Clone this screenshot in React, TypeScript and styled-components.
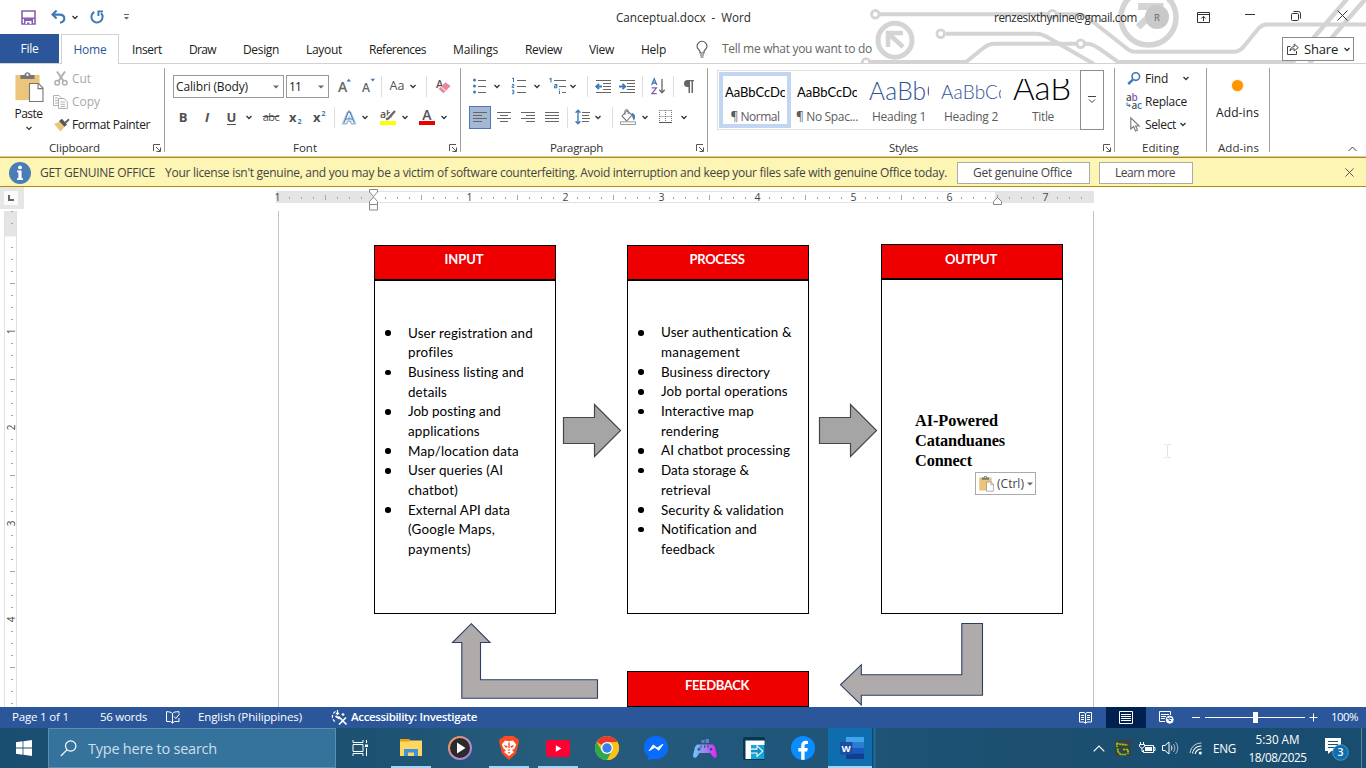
import React, { useLayoutEffect, useRef } from "react";
import styled, { createGlobalStyle, css } from "styled-components";

const UI = `"Open Sans", "Noto Sans", sans-serif`;
const DOC = `Lato, "Open Sans", sans-serif`;
const BLUE = "#2b579a";

const GlobalStyle = createGlobalStyle`
  * { box-sizing: border-box; }
  html, body { margin: 0; padding: 0; overflow: hidden; background: #fff; }
  body { font-family: ${UI}; font-size: 12px; color: #202020; }
  svg { display: block; flex: none; overflow: visible; }
`;

/* Tracks a label so that it takes exactly the width it is given. */
type FitProps = { w: number; children: string; className?: string };
function FitBase({ w, children, className }: FitProps) {
  const ref = useRef<HTMLSpanElement>(null);
  useLayoutEffect(() => {
    const el = ref.current;
    if (!el) return;
    el.style.letterSpacing = "0px";
    const natural = el.getBoundingClientRect().width;
    el.style.letterSpacing = `${(w - natural) / children.length}px`;
  }, [w, children]);
  return (
    <span ref={ref} className={className}>
      {children}
    </span>
  );
}
const Fit = styled(FitBase)`
  display: inline-block;
  flex: none;
  white-space: pre;
  line-height: 16px;
`;

/* ---------- frame ---------- */
const Window = styled.div`
  width: 1366px;
  height: 768px;
  display: flex;
  flex-direction: column;
  background: #fff;
  overflow: hidden;
`;
const Header = styled.header`
  position: relative;
  height: 64px;
  flex: none;
  border-bottom: 1px solid #d2d2d2;
`;
const Circuit = styled.svg`
  position: absolute;
  right: 0;
  top: 0;
  clip-path: inset(0);
`;
const TitleBar = styled.div`
  position: relative;
  height: 34px;
  display: flex;
  align-items: center;
`;
const Slot = styled.div<{ $w?: number; $l?: number }>`
  flex: none;
  display: flex;
  align-items: center;
  justify-content: center;
  width: ${(p) => (p.$w ? `${p.$w}px` : "auto")};
  margin-left: ${(p) => p.$l ?? 0}px;
`;
const TitleText = styled(Fit)`
  font-size: 11.7px;
  color: #2b2b2b;
`;
const Avatar = styled.div`
  width: 24px;
  height: 24px;
  margin-left: 8px;
  border-radius: 50%;
  background: #c9c9c9;
  color: #666;
  font-size: 9.5px;
  display: flex;
  align-items: center;
  justify-content: center;
`;
const TabBar = styled.nav`
  position: relative;
  height: 30px;
  display: flex;
  align-items: center;
`;
const FileTab = styled.div`
  width: 59px;
  height: 29px;
  align-self: flex-start;
  display: flex;
  align-items: center;
  justify-content: center;
  background: ${BLUE};
  color: #fff;
`;
const HomeTab = styled.div`
  width: 58px;
  height: 30px;
  margin-left: 2px;
  padding-top: 1px;
  border: 1px solid #d2d2d2;
  border-bottom: 0;
  background: #fff;
  color: ${BLUE};
  display: flex;
  align-items: center;
  justify-content: center;
`;
const TabLabel = styled(Fit)`
  font-size: 12px;
`;
const TabList = styled.div`
  display: flex;
  gap: 27px;
  margin-left: 13px;
  padding-top: 2px;
`;
const TellMe = styled(Fit)`
  font-size: 12px;
  color: #666;
  margin-left: 14px;
`;
const ShareButton = styled.div`
  width: 72px;
  height: 24px;
  margin-left: auto;
  margin-right: 12px;
  border: 1px solid #8a8a8a;
  background: #fff;
  display: flex;
  align-items: center;
  padding-left: 4px;
  gap: 5px;
`;
const ShareLabel = styled(Fit)`
  font-size: 13px;
`;

/* ---------- ribbon ---------- */
const Ribbon = styled.div`
  height: 92px;
  flex: none;
  display: flex;
`;
const GroupBox = styled.section<{ $w: number }>`
  width: ${(p) => p.$w}px;
  height: 92px;
  flex: none;
  display: flex;
  flex-direction: column;
  background: linear-gradient(#a0a0a0, #a0a0a0) right 4px / 1px 84px no-repeat;
`;
const GroupBody = styled.div`
  height: 75px;
  padding-top: 10px;
`;
const GroupFooter = styled.div`
  height: 17px;
  display: flex;
  align-items: center;
`;
const GroupName = styled(Fit)<{ $l: number }>`
  font-size: 11.5px;
  color: #333;
  margin-left: ${(p) => p.$l}px;
`;
const Launcher = styled.div`
  margin-left: auto;
  margin-right: 4px;
`;
const ToolRow = styled.div`
  display: flex;
  align-items: center;
  height: 24px;
  margin-bottom: 7px;
`;
const Rule = styled.i<{ $l: number }>`
  width: 1px;
  height: 21px;
  flex: none;
  background: #dedede;
  margin-left: ${(p) => p.$l}px;
`;
const Combo = styled.div<{ $w: number; $l: number }>`
  width: ${(p) => p.$w}px;
  height: 23px;
  margin-left: ${(p) => p.$l}px;
  flex: none;
  border: 1px solid #999;
  display: flex;
  align-items: center;
  justify-content: space-between;
  padding: 1px 4px 0 2px;
`;
const Command = styled(Fit)<{ $off?: boolean }>`
  font-size: 12px;
  color: ${(p) => (p.$off ? "#a8a8a8" : "#202020")};
`;
const Pressed = styled.div`
  width: 22px;
  height: 23px;
  margin-left: 8px;
  flex: none;
  border: 1px solid #4a7ab5;
  background: #a5b8d3;
  display: flex;
  align-items: center;
  justify-content: center;
`;
const CommandsBody = styled(GroupBody)`
  display: flex;
  padding-top: 3px;
`;
const PasteButton = styled.div`
  width: 52px;
  padding: 5px 0 0 7px;
  display: flex;
  flex-direction: column;
  align-items: center;
`;
const PasteCaption = styled.div`
  margin: 3px 0 0 -2px;
  height: 16px;
`;
const CommandColumn = styled.div`
  display: flex;
  flex-direction: column;
`;
const CommandRow = styled.div`
  height: 23px;
  display: flex;
  align-items: center;
`;
const Glyph = styled.span<{ $b?: boolean; $i?: boolean; $s?: number }>`
  font-size: ${(p) => p.$s ?? 13}px;
  font-weight: ${(p) => (p.$b ? 700 : 400)};
  font-style: ${(p) => (p.$i ? "italic" : "normal")};
  color: #505050;
  line-height: 18px;
`;
const Underlined = styled(Glyph)`
  border-bottom: 1px solid #505050;
  line-height: 14px;
`;
const Struck = styled(Glyph)`
  text-decoration: line-through;
  letter-spacing: -0.6px;
`;
const Gallery = styled.div`
  width: 387px;
  height: 60px;
  margin: -4px 0 0 9px;
  border: 1px solid #e1e1e1;
  display: flex;
`;
const StyleCard = styled.div<{ $on?: boolean }>`
  width: 72px;
  height: 56px;
  margin-top: 1px;
  flex: none;
  border: 4px solid ${(p) => (p.$on ? "#c2d5f2" : "transparent")};
  display: flex;
  flex-direction: column;
  align-items: center;
  &:first-child {
    margin-left: 1px;
  }
`;
const Sample = styled.div<{ $s: number; $light?: boolean; $c: string; $up?: number }>`
  width: 60px;
  height: 30px;
  margin-top: 3px;
  overflow: hidden;
  display: flex;
  align-items: flex-start;
  font-family: ${DOC};
  font-size: ${(p) => p.$s}px;
  font-weight: ${(p) => (p.$light ? 300 : 400)};
  color: ${(p) => p.$c};
  & span {
    line-height: 32px;
    margin-top: ${(p) => -3 - (p.$up ?? 0)}px;
  }
`;
const StyleName = styled(Fit)`
  font-size: 12px;
  line-height: 15px;
  color: #5c5c5c;
`;
const MoreStyles = styled.div`
  width: 24px;
  height: 60px;
  margin: -1px -1px 0 auto;
  border: 1px solid #8e8e8e;
  display: flex;
  align-items: center;
  justify-content: center;
`;
const AddIns = styled.div`
  display: flex;
  flex-direction: column;
  align-items: center;
  gap: 14px;
  padding: 6px 2px 0 0;
`;
const Dot = styled.div`
  width: 11px;
  height: 11px;
  border-radius: 50%;
  background: #ff9500;
  box-shadow: 0 0 2px #ffc680;
`;
const Collapse = styled.div`
  margin-left: 78px;
  align-self: flex-end;
  padding-bottom: 4px;
`;

/* ---------- licence bar ---------- */
const Notice = styled.div`
  height: 31px;
  flex: none;
  border-top: 1px solid #d2cdb5;
  background: #fcf5b4;
  box-shadow: inset 0 1px #b58c0a, inset 0 -1px #b58c0a;
  display: flex;
  align-items: center;
  padding: 1px 0 0 9px;
`;
const NoticeText = styled(Fit)`
  font-size: 12px;
  color: #444;
`;
const NoticeButton = styled.div<{ $w: number; $l: number }>`
  width: ${(p) => p.$w}px;
  height: 22px;
  margin-left: ${(p) => p.$l}px;
  padding-right: 2px;
  border: 1px solid #ababab;
  background: #fff;
  display: flex;
  align-items: center;
  justify-content: center;
`;

/* ---------- document area ---------- */
const RulerRow = styled.div`
  height: 24px;
  flex: none;
  display: flex;
`;
const TabStop = styled.div`
  width: 24px;
  height: 22px;
  background: #e6e6e6;
  padding: 4px 0 0 4px;
`;
const TabStopBox = styled.div`
  width: 14px;
  height: 14px;
  background: #fafafa;
  display: flex;
  align-items: center;
  justify-content: center;
`;
const HRuler = styled.div`
  width: 818px;
  height: 12px;
  margin: 4px 0 0 252px;
  background: #e4e4e4;
`;
const Desk = styled.div`
  height: 496px;
  flex: none;
  display: flex;
  position: relative;
  overflow: hidden;
`;
const VRuler = styled.div`
  width: 13px;
  height: 496px;
  margin-left: 4px;
  flex: none;
  background: #fff;
  border: solid #e1e1e1;
  border-width: 0 1px;
`;
const Page = styled.main`
  position: relative;
  width: 816px;
  margin-left: 261px;
  flex: none;
  border: solid #c3c3c3;
  border-width: 0 1px;
`;
const Shapes = styled.svg`
  position: absolute;
  left: 0;
  top: 0;
`;
const Node = styled.div<{ $x: number; $y: number; $h: number }>`
  position: absolute;
  left: ${(p) => p.$x}px;
  top: ${(p) => p.$y}px;
  width: 182px;
  height: ${(p) => p.$h}px;
  border: 1px solid #000;
  background: #fff;
`;
const NodeHead = styled.div<{ $divided?: boolean; $pad?: number }>`
  height: ${(p) => (p.$divided ? 35 : 34)}px;
  background: #ee0000;
  color: #fff;
  font-family: ${DOC};
  font-weight: 700;
  font-size: 13px;
  text-align: center;
  padding: ${(p) => p.$pad ?? 5}px 2px 0 0;
  ${(p) =>
    p.$divided &&
    css`
      border-bottom: 2px solid #000;
    `}
`;
const Lines = styled.div<{ $top: number }>`
  padding-top: ${(p) => p.$top}px;
`;
const Line = styled.div`
  height: 19.7px;
  display: flex;
  align-items: center;
  font-family: ${DOC};
  font-size: 13.4px;
  color: #000;
`;
const Bullet = styled.i<{ $on: boolean }>`
  width: 5.5px;
  height: 5.5px;
  margin: 1px 17.5px 0 10px;
  border-radius: 50%;
  background: ${(p) => (p.$on ? "#000" : "transparent")};
`;
const Result = styled.div`
  padding: 131px 0 0 33px;
  display: flex;
  flex-direction: column;
  align-items: flex-start;
`;
const ResultLine = styled(Fit)`
  font-family: "Liberation Serif", serif;
  font-weight: 700;
  font-size: 16.3px;
  line-height: 20px;
  color: #000;
`;
const PasteOptions = styled.div`
  position: absolute;
  left: 696px;
  top: 261px;
  width: 61px;
  height: 23px;
  border: 1px solid #ababab;
  background: #fff;
  display: flex;
  align-items: center;
  padding-left: 3px;
  gap: 3px;
`;
const PasteLabel = styled(Fit)`
  font-size: 12px;
  color: #444;
`;
const TextCursor = styled.svg`
  position: absolute;
  left: 1164px;
  top: 233px;
`;

/* ---------- status bar ---------- */
const Status = styled.footer`
  height: 21px;
  flex: none;
  background: ${BLUE};
  color: #fff;
  display: flex;
  align-items: center;
`;
const StatusText = styled(Fit)<{ $l: number; $b?: boolean }>`
  font-size: 11.5px;
  font-weight: ${(p) => (p.$b ? 600 : 400)};
  margin-left: ${(p) => p.$l}px;
  margin-top: -1px;
`;
const ViewOn = styled.div`
  width: 40px;
  height: 21px;
  margin-left: 14px;
  background: #002050;
  display: flex;
  align-items: center;
  justify-content: center;
`;

/* ---------- taskbar ---------- */
const Taskbar = styled.div`
  height: 40px;
  flex: none;
  display: flex;
  background: linear-gradient(90deg, #1a4e70 0%, #1d5273 28%, #275c7d 40%, #20567a 58%, #1c4f70 75%, #184d70 100%);
`;
const StartCell = styled.div`
  width: 48px;
  display: flex;
  align-items: center;
  justify-content: center;
`;
const SearchBox = styled.div`
  width: 288px;
  height: 40px;
  border: 1px solid #5b90b3;
  background: #35739d;
  display: flex;
  align-items: center;
  padding-left: 11px;
`;
const SearchLabel = styled(Fit)`
  font-size: 14.5px;
  line-height: 20px;
  color: #cfdfe9;
  margin: 1px 0 0 11px;
`;
const AppCell = styled.div<{ $run?: boolean; $active?: boolean }>`
  width: 49px;
  height: 40px;
  flex: none;
  display: flex;
  align-items: center;
  justify-content: center;
  ${(p) =>
    p.$run &&
    css`
      background: linear-gradient(#9fd5fb, #9fd5fb) center bottom / 40px 2px no-repeat;
    `}
  ${(p) =>
    p.$active &&
    css`
      width: 44px;
      margin: 0 4px 0 1px;
      padding-left: 4px;
      background: linear-gradient(#9fd5fb, #9fd5fb) left bottom / 44px 2px no-repeat, #0f6cad;
      box-shadow: 1px 0 #14435f, 4px 0 #1d6391;
    `}
`;
const Tray = styled.div`
  margin-left: auto;
  display: flex;
  align-items: center;
  color: #fff;
`;
const Clock = styled.div`
  width: 60px;
  margin-left: 12px;
  padding-right: 1px;
  display: flex;
  flex-direction: column;
  align-items: center;
`;
const TrayText = styled(Fit)`
  font-size: 11.7px;
  line-height: 18px;
`;
const ShowDesktop = styled.div`
  width: 5px;
  height: 40px;
  margin-left: 12px;
  border-left: 1px solid #5d8299;
`;

/* ---------- icons ---------- */
const Chevron = ({ c = "#333" }: { c?: string }) => (
  <svg width="8" height="5" viewBox="0 0 8 5">
    <path d="M1.5 1 L4 3.5 L6.5 1" fill="none" stroke={c} strokeWidth="1.3" />
  </svg>
);
const Drop = () => (
  <svg width="6" height="4" viewBox="0 0 6 4">
    <path d="M0 0.5H6L3 3.5Z" fill="#666" />
  </svg>
);
const LaunchIcon = () => (
  <svg width="8" height="8" viewBox="0 0 8 8" fill="none" stroke="#555">
    <path d="M.5 7V.5H7M3 3L7 7M7.5 3.5V7.5H3.5" />
  </svg>
);
const StrokeLines = ({ rows, w = 14 }: { rows: [number, number][]; w?: number }) => (
  <svg width={w} height="11" viewBox={`0 0 ${w} 11`} stroke="#666" strokeWidth="1">
    {rows.map(([a, b], i) => (
      <path key={i} d={`M${a} ${i * 3 + 0.5}H${b}`} />
    ))}
  </svg>
);
const SaveIcon = () => (
  <svg width="15" height="15" viewBox="0 0 15 15">
    <path d="M1 1H14V14H1Z" fill="#fff" stroke="#8a5cb0" strokeWidth="1.6" />
    <path d="M1 7.5H14V9H1Z M3 9H12V14H3Z" fill="#8a5cb0" />
    <path d="M4.5 11H10.5V14H8.5V12.5H6V14H4.5Z" fill="#fff" />
  </svg>
);
const UndoIcon = () => (
  <svg width="15" height="14" viewBox="0 0 15 14" fill="none" stroke="#3f79b7" strokeWidth="2.1">
    <path d="M1.5 4.6H8.5C11.5 4.6 13.3 6.3 13.3 8.6C13.3 10.8 11.6 12.4 9 12.8" />
    <path d="M5.6 .6L1.5 4.6L5.6 8.6" />
  </svg>
);
const RedoIcon = () => (
  <svg width="14" height="14" viewBox="0 0 14 14" fill="none" stroke="#3f79b7" strokeWidth="2">
    <path d="M4.3 2A5.6 5.6 0 1 0 11 3" />
    <path d="M13 1.4H8.4V6" strokeWidth="1.9" />
  </svg>
);
const PasteIcon = ({ s = 29 }: { s?: number }) => (
  <svg width={s} height={s * 1.04} viewBox="0 0 28 30">
    <path d="M0 3H24V28H0Z" fill="#ecc57c" />
    <path d="M5 3H9C9 -.7 15 -.7 15 3H19V7H5Z" fill="#777" />
    <circle cx="12" cy="2.8" r="1.2" fill="#fff" />
    <path d="M14 11.5H23L27.4 16V29.3H14Z" fill="#fff" stroke="#777" strokeWidth="1.1" />
    <path d="M22.5 11.5V16.5H27.4" fill="none" stroke="#777" strokeWidth="1.1" />
  </svg>
);
const CutIcon = () => (
  <svg width="14" height="15" viewBox="0 0 14 15" fill="none" stroke="#b0b0b0" strokeWidth="1.5">
    <path d="M3 .5L9.5 10M11 .5L4.5 10" strokeWidth="2" />
    <circle cx="3.2" cy="11.7" r="2.3" />
    <circle cx="10.8" cy="11.7" r="2.3" />
  </svg>
);
const CopyIcon = () => (
  <svg width="15" height="14" viewBox="0 0 15 14" fill="#fff" stroke="#b0b0b0">
    <path d="M.5 .5H6L8.5 3V10.5H.5Z M2 3H5M2 5.5H5M2 8H5" />
    <path d="M5.5 3.5H11L14.3 6.5V13.5H5.5Z M7.5 7H12M7.5 9.3H12M7.5 11.5H12" />
  </svg>
);
const BrushIcon = () => (
  <svg width="16" height="14" viewBox="0 0 16 14">
    <path d="M0 6L6 3.5L11 8.5L6.5 13.5Z" fill="#ecc57c" />
    <path d="M5 3L8 .8L13 6.5L10.5 8.8Z" fill="#555" />
    <path d="M10 4.5L14.5 .6L15.6 2L11.6 6Z" fill="#666" />
  </svg>
);
const SizeIcon = ({ up }: { up?: boolean }) => (
  <svg width="14" height="16" viewBox="0 0 14 16">
    <text x="0" y="14" fontFamily={UI} fontSize={up ? 14 : 12} fontWeight="600" fill="#666">A</text>
    <path d={up ? "M8.5 3.5L10.8 .8L13 3.5Z" : "M8.5 .8L10.8 3.5L13 .8Z"} fill="#3f79b7" />
  </svg>
);
const EraserIcon = () => (
  <svg width="16" height="16" viewBox="0 0 16 16">
    <text x="1" y="9.5" fontFamily={UI} fontSize="11" fontWeight="600" fill="#555">A</text>
    <path d="M3.5 11L10.5 4.3L15.6 8L8.5 15.2Z" fill="#e8889a" />
    <path d="M5.5 8.5L10.7 12.8" stroke="#fff" />
  </svg>
);
const SubSup = ({ up }: { up?: boolean }) => (
  <svg width="13" height="15" viewBox="0 0 13 15">
    <text x="0" y="11.5" fontFamily={UI} fontSize="13" fontWeight="700" fill="#505050">x</text>
    <text x="8.5" y={up ? 6 : 14} fontFamily={UI} fontSize="7" fontWeight="700" fill="#3f79b7">2</text>
  </svg>
);
const EffectIcon = () => (
  <svg width="14" height="15" viewBox="0 0 14 15">
    <text x="1" y="12.5" fontFamily={UI} fontSize="15" fontWeight="600" fill="#fff" stroke="#3f79b7" strokeWidth="3.2" strokeOpacity=".5" paintOrder="stroke">A</text>
    <path d="M1.2 12.5L5.4 1.8H6.8L11 12.5M3 9H9.2" fill="none" stroke="#3f79b7" strokeWidth="1" />
  </svg>
);
const HighlightIcon = () => (
  <svg width="16" height="16" viewBox="0 0 16 16">
    <text x="0" y="9" fontFamily={UI} fontSize="10.5" fontWeight="600" fill="#555">ab</text>
    <path d="M14.5 1.5L7 10" stroke="#fff" strokeWidth="4" />
    <path d="M15 2L8.5 9.3L6 10.5" stroke="#666" strokeWidth="2.2" fill="none" />
    <path d="M0 12H16V16H0Z" fill="#ffff00" />
  </svg>
);
const ColorIcon = () => (
  <svg width="16" height="16" viewBox="0 0 16 16">
    <text x="3.2" y="11" fontFamily={UI} fontSize="14" fontWeight="600" fill="#555">A</text>
    <path d="M0 12H16V16H0Z" fill="#ee0000" />
  </svg>
);
const BulletsIcon = () => (
  <svg width="14" height="16" viewBox="0 0 14 16">
    {[2, 8, 14].map((y) => (
      <g key={y}>
        <circle cx="1.5" cy={y} r="1.5" fill="#3f79b7" />
        <path d={`M5 ${y + 0.5}H13`} stroke="#666" />
      </g>
    ))}
  </svg>
);
const NumbersIcon = () => (
  <svg width="16" height="16" viewBox="0 0 16 16">
    <path d="M1 .5L2.5 0V4M1 6.5H2.8V8H1.2V9.5H3.2M1 12.3H2.8V15.7H1M1.4 14H2.8" fill="none" stroke="#3f79b7" />
    <path d="M6 2.5H15M6 8.5H15M6 14.5H15" stroke="#666" />
  </svg>
);
const MultiIcon = () => (
  <svg width="18" height="16" viewBox="0 0 18 16">
    <path d="M.5 1L2 .3V4.5M5.5 6.5H7.8V10M7.8 8H5.5V9.7H8M10.5 12.7V16M10.5 10.8V11.8" fill="none" stroke="#3f79b7" strokeWidth="1.1" />
    <path d="M5 2.5H17M10 8.5H17M13 14.5H17" stroke="#666" />
  </svg>
);
const IndentIcon = ({ out }: { out?: boolean }) => (
  <svg width="17" height="13" viewBox="0 0 17 13" fill="none">
    <path d="M1 .5H16M8 3.5H16M8 6.5H16M8 9.5H16M1 12.5H16" stroke="#666" />
    <path d={out ? "M7 6.5H1.5M4 3.8L1.2 6.5L4 9.2" : "M0 6.5H6M3.5 3.8L6.3 6.5L3.5 9.2"} stroke="#3f79b7" strokeWidth="1.8" />
  </svg>
);
const SortIcon = () => (
  <svg width="15" height="17" viewBox="0 0 15 17" fill="none">
    <path d="M.7 7L3.2 .8L5.8 7M1.6 5H4.9" stroke="#3f79b7" strokeWidth="1.3" />
    <path d="M.7 9.8H5.4L.9 15.7H5.8" stroke="#8a5cb0" strokeWidth="1.3" />
    <path d="M11 1V15M8.3 11.8L11 14.8L13.7 11.8" stroke="#666" strokeWidth="1.3" />
  </svg>
);
const PilcrowIcon = () => (
  <svg width="12" height="13" viewBox="0 0 12 13" fill="#666">
    <path d="M11 0H4.5A3.5 3.5 0 0 0 4.5 7H5.5V13H7V1.2H8.5V13H10V1.2H11Z" />
  </svg>
);
const SpacingIcon = () => (
  <svg width="15" height="16" viewBox="0 0 15 16" fill="none">
    <path d="M3 1.5V14.5M.6 3.8L3 1.3L5.4 3.8M.6 12.2L3 14.7L5.4 12.2" stroke="#3f79b7" strokeWidth="1.4" />
    <path d="M7 3.5H15M7 6.5H14M7 9.5H15M7 12.5H14" stroke="#666" />
  </svg>
);
const BucketIcon = () => (
  <svg width="18" height="16" viewBox="0 0 18 16" fill="none">
    <path d="M8 1.5L3 7.2L7.7 12L13 6Z" fill="#fff" stroke="#777" strokeWidth="1.1" />
    <path d="M6 6V1.6C6 .3 9.2 .3 9.2 1.6V5" stroke="#777" />
    <path d="M12.5 4C16.5 4.5 16.8 8 15 11.5C13.7 10 13.3 8 13 6Z" fill="#3f79b7" />
    <path d="M1.5 12.8H16.5V15.5H1.5Z" fill="#fff" stroke="#999" />
  </svg>
);
const BorderIcon = () => (
  <svg width="14" height="14" viewBox="0 0 14 14" fill="none" stroke="#777">
    <path d="M.5 .5H13M.5 6.5H13M.5 0V12M6.5 0V12M12.5 0V12" strokeDasharray="1 1" />
    <path d="M0 12.5H13" stroke="#555" />
  </svg>
);
const FindIcon = () => (
  <svg width="14" height="13" viewBox="0 0 14 13" fill="none" stroke="#3f79b7">
    <circle cx="8.8" cy="4.6" r="3.8" strokeWidth="1.6" />
    <path d="M6 7.6L1.2 12" strokeWidth="2.4" />
  </svg>
);
const ReplaceIcon = () => (
  <svg width="17" height="17" viewBox="0 0 17 17" fontFamily={UI} fontSize="10" fontWeight="600">
    <text x="0" y="8" fill="#555">a</text>
    <text x="5.5" y="8" fill="#8a5cb0">b</text>
    <text x="5.5" y="15.5" fill="#555">a</text>
    <text x="11" y="15.5" fill="#3f79b7">c</text>
    <path d="M1 9.5V12.5H4M2.6 10.8L4.2 12.5L2.6 14.2" fill="none" stroke="#3f79b7" />
  </svg>
);
const PointerIcon = () => (
  <svg width="10" height="15" viewBox="0 0 10 15">
    <path d="M.8 .8V12L3.6 9.5L5.5 14L7.5 13L5.6 9H9.2Z" fill="#fff" stroke="#777" strokeWidth="1.1" />
  </svg>
);
const BulbIcon = () => (
  <svg width="12" height="17" viewBox="0 0 12 17" fill="none" stroke="#555" strokeWidth="1.1">
    <path d="M4 12V10.5C3.5 8.8 1 8 1 5.3A4.8 4.8 0 0 1 11 5.3C11 8 8.5 8.8 8 10.5V12ZM4 14H8M4.5 16H7.5" />
  </svg>
);
const ShareIcon = () => (
  <svg width="12" height="12" viewBox="0 0 12 12" fill="none" stroke="#444">
    <path d="M3.5 3.5H.5V11.5H9.5V8" />
    <path d="M3 8C3.3 5 5 3.7 7.2 3.7V1L11.3 4.6L7.2 8V5.8C5.3 5.7 4 6.5 3 8Z" />
  </svg>
);
const InfoIcon = () => (
  <svg width="22" height="22" viewBox="0 0 22 22">
    <circle cx="11" cy="11" r="11" fill="#4a7db5" />
    <circle cx="11" cy="5.4" r="1.9" fill="#fff" />
    <path d="M8 8.5H12.6V16.3H14V18H8V16.3H9.4V10.2H8Z" fill="#fff" />
  </svg>
);
const Cross = ({ s = 9, c = "#555" }: { s?: number; c?: string }) => (
  <svg width={s} height={s} viewBox="0 0 10 10">
    <path d="M.5 .5L9.5 9.5M9.5 .5L.5 9.5" stroke={c} strokeWidth="1.1" />
  </svg>
);

const CircuitArt = () => (
  <Circuit width="506" height="63" viewBox="860 0 506 63" fill="none" stroke="#d4d4d4" strokeWidth="4">
    <path d="M880 14.3H1075C1082 14.3 1086 16 1090 19.5L1125 47C1129 50.5 1131 51.7 1136 51.7H1234C1238 51.7 1240 50.5 1243 47.5L1258 29C1261 25.5 1263 24.5 1267 24.5H1366" />
    <path d="M946 33.7H1036C1041 33.7 1044 35 1048 37.5L1094 64" />
    <path d="M871 62H966L984 47.5C988 44.5 991 43.7 995 43.7H1086C1092 43.7 1095 45.5 1099 48.5L1118 62H1292" />
    <path d="M1347 -1L1291 64M1368 -4L1309 64" strokeWidth="4.5" />
    <circle cx="1148.5" cy="17.5" r="27.5" fill="#fff" strokeWidth="5.5" />
    <path d="M1138 6.5H1160V26M1159 8L1138 27" strokeWidth="7" />
    <circle cx="895" cy="40.2" r="17" fill="#fff" strokeWidth="5" />
    <path d="M888 47V33H903M889 34L903 47" strokeWidth="4.5" />
    <g fill="#fff" strokeWidth="2.8">
      <circle cx="875.3" cy="14.3" r="3.8" />
      <circle cx="1052.3" cy="14.3" r="3.8" />
      <circle cx="940.7" cy="33.7" r="3.8" />
      <circle cx="1080.7" cy="43.7" r="3.8" />
      <circle cx="866" cy="62.5" r="3.8" />
    </g>
  </Circuit>
);

/* ---------- rulers ---------- */
const range = (a: number, b: number) => Array.from({ length: b - a + 1 }, (_, i) => a + i);

const HorizontalRuler = () => (
  <HRuler>
    <svg width="818" height="12" viewBox="276 191 818 12">
      <path d="M373 191H995V203H373Z" fill="#e1e1e1" />
      <path d="M373 192H995V202H373Z" fill="#fff" />
      {range(-7, 59).map((i) => {
        if (i % 8 === 0) return null;
        const x = 373.5 + i * 12;
        return <path key={i} d={i % 4 === 0 ? `M${x} 195V200` : `M${x} 197V199`} stroke="#a6a6a6" />;
      })}
      {[-1, 1, 2, 3, 4, 5, 6, 7].map((n) => (
        <text key={n} x={373.5 + n * 96} y="201" fontSize="10.5" fontFamily={UI} fill="#444" textAnchor="middle">
          {Math.abs(n)}
        </text>
      ))}
      <g fill="#fff" stroke="#888">
        <path d="M369.5 189.5H377.5V192L373.5 196.5L369.5 192Z" />
        <path d="M373.5 197L377.5 201.5V204.5H369.5V201.5Z M369.5 204.5H377.5V210H369.5Z" />
        <path d="M997.5 197.5L1001.5 201.5V204.5H993.5V201.5Z" />
      </g>
    </svg>
  </HRuler>
);

const VerticalRuler = () => (
  <VRuler>
    <svg width="11" height="496" viewBox="5 211 11 496">
      <path d="M5 211H16V236.5H5Z" fill="#e4e4e4" />
      {range(-2, 39).map((i) => {
        if (i % 8 === 0) return null;
        const y = 235.5 + i * 12;
        return <path key={i} d={i % 4 === 0 && i > 0 ? `M10 ${y}H15` : `M11 ${y}H13`} stroke="#a6a6a6" />;
      })}
      {[1, 2, 3, 4].map((n) => (
        <text key={n} transform={`translate(14.5 ${235.5 + n * 96}) rotate(-90)`} fontSize="10" fontFamily={UI} fill="#444" textAnchor="middle">
          {n}
        </text>
      ))}
    </svg>
  </VRuler>
);

/* ---------- ribbon groups ---------- */
function Group(props: { w: number; name: string; nameX: number; nameW: number; launch?: boolean; children: React.ReactNode }) {
  return (
    <GroupBox $w={props.w}>
      {props.children}
      <GroupFooter>
        <GroupName w={props.nameW} $l={props.nameX}>{props.name}</GroupName>
        {props.launch && <Launcher><LaunchIcon /></Launcher>}
      </GroupFooter>
    </GroupBox>
  );
}

const ClipboardGroup = () => (
  <Group w={165} name="Clipboard" nameX={49} nameW={51} launch>
    <CommandsBody>
      <PasteButton>
        <PasteIcon />
        <PasteCaption><Command w={28}>Paste</Command></PasteCaption>
        <svg width="9" height="11" viewBox="0 0 9 11"><path d="M1.5 6L4 8.5L6.5 6" fill="none" stroke="#333" strokeWidth="1.2" /></svg>
      </PasteButton>
      <CommandColumn>
        <CommandRow><Slot $l={2} $w={14}><CutIcon /></Slot><Slot $l={4}><Command w={19} $off>Cut</Command></Slot></CommandRow>
        <CommandRow><Slot $l={1} $w={15}><CopyIcon /></Slot><Slot $l={4}><Command w={28} $off>Copy</Command></Slot></CommandRow>
        <CommandRow><Slot $l={2} $w={16}><BrushIcon /></Slot><Slot $l={2}><Command w={78}>Format Painter</Command></Slot></CommandRow>
      </CommandColumn>
    </CommandsBody>
  </Group>
);

const FontGroup = () => (
  <Group w={296} name="Font" nameX={128} nameW={24} launch>
    <GroupBody>
      <ToolRow>
        <Combo $w={111} $l={8}><Command w={72}>Calibri (Body)</Command><Drop /></Combo>
        <Combo $w={43} $l={2}><Command w={12}>11</Command><Drop /></Combo>
        <Slot $l={9} $w={14}><SizeIcon up /></Slot>
        <Slot $l={10} $w={14}><SizeIcon /></Slot>
        <Rule $l={5} />
        <Slot $l={7} $w={16}><Glyph $s={12.5}>Aa</Glyph></Slot>
        <Slot $l={4}><Chevron /></Slot>
        <Rule $l={9} />
        <Slot $l={8} $w={16}><EraserIcon /></Slot>
      </ToolRow>
      <ToolRow>
        <Slot $l={13} $w={10}><Glyph $b>B</Glyph></Slot>
        <Slot $l={14} $w={10}><Glyph $b $i>I</Glyph></Slot>
        <Slot $l={14} $w={11}><Underlined $b>U</Underlined></Slot>
        <Slot $l={8}><Chevron /></Slot>
        <Slot $l={10} $w={16}><Struck $s={11}>abc</Struck></Slot>
        <Slot $l={10} $w={12}><SubSup /></Slot>
        <Slot $l={12} $w={12}><SubSup up /></Slot>
        <Rule $l={9} />
        <Slot $l={8} $w={14}><EffectIcon /></Slot>
        <Slot $l={4}><Chevron /></Slot>
        <Slot $l={11} $w={16}><HighlightIcon /></Slot>
        <Slot $l={5}><Chevron /></Slot>
        <Slot $l={10} $w={16}><ColorIcon /></Slot>
        <Slot $l={5}><Chevron /></Slot>
      </ToolRow>
    </GroupBody>
  </Group>
);

const ParagraphGroup = () => (
  <Group w={247} name="Paragraph" nameX={89} nameW={53} launch>
    <GroupBody>
      <ToolRow>
        <Slot $l={12}><BulletsIcon /></Slot>
        <Slot $l={6}><Chevron /></Slot>
        <Slot $l={10}><NumbersIcon /></Slot>
        <Slot $l={6}><Chevron /></Slot>
        <Slot $l={8}><MultiIcon /></Slot>
        <Slot $l={2}><Chevron /></Slot>
        <Rule $l={10} />
        <Slot $l={7}><IndentIcon out /></Slot>
        <Slot $l={7}><IndentIcon /></Slot>
        <Rule $l={6} />
        <Slot $l={8}><SortIcon /></Slot>
        <Rule $l={7} />
        <Slot $l={9}><PilcrowIcon /></Slot>
      </ToolRow>
      <ToolRow>
        <Pressed><StrokeLines rows={[[0, 14], [0, 9], [0, 14], [0, 9]]} /></Pressed>
        <Slot $l={6}><StrokeLines rows={[[0, 14], [3, 11], [0, 14], [3, 11]]} /></Slot>
        <Slot $l={10}><StrokeLines rows={[[0, 14], [5, 14], [0, 14], [5, 14]]} /></Slot>
        <Slot $l={10}><StrokeLines rows={[[0, 14], [0, 14], [0, 14], [0, 14]]} /></Slot>
        <Rule $l={8} />
        <Slot $l={7}><SpacingIcon /></Slot>
        <Slot $l={4}><Chevron /></Slot>
        <Rule $l={10} />
        <Slot $l={6}><BucketIcon /></Slot>
        <Slot $l={4}><Chevron /></Slot>
        <Slot $l={10}><BorderIcon /></Slot>
        <Slot $l={7}><Chevron /></Slot>
      </ToolRow>
    </GroupBody>
  </Group>
);

const STYLES = [
  { name: "¶ Normal", w: 49, text: "AaBbCcDc", tw: 61, s: 13, c: "#000", light: false, up: 0 },
  { name: "¶ No Spac...", w: 62, text: "AaBbCcDc", tw: 61, s: 13, c: "#000", light: false, up: 0 },
  { name: "Heading 1", w: 54, text: "AaBbC", tw: 74, s: 24.5, c: "#2f5496", light: true, up: 1.5 },
  { name: "Heading 2", w: 54, text: "AaBbCc", tw: 66, s: 19, c: "#2f5496", light: true, up: 0 },
  { name: "Title", w: 22, text: "AaB", tw: 58, s: 33, c: "#000", light: true, up: 5 },
];

const StylesGroup = () => (
  <Group w={407} name="Styles" nameX={181} nameW={29} launch>
    <GroupBody>
      <Gallery>
        {STYLES.map((s, i) => (
          <StyleCard key={s.name} $on={i === 0}>
            <Sample $s={s.s} $light={s.light} $c={s.c} $up={s.up}><Fit w={s.tw}>{s.text}</Fit></Sample>
            <StyleName w={s.w}>{s.name}</StyleName>
          </StyleCard>
        ))}
        <MoreStyles>
          <svg width="8" height="8" viewBox="0 0 8 8" fill="none" stroke="#444"><path d="M0 .5H8M1 3.5L4 6.5L7 3.5" /></svg>
        </MoreStyles>
      </Gallery>
    </GroupBody>
  </Group>
);

const EditingGroup = () => (
  <Group w={92} name="Editing" nameX={27} nameW={37}>
    <CommandsBody>
      <CommandColumn>
        <CommandRow><Slot $l={12} $w={14}><FindIcon /></Slot><Slot $l={4}><Command w={23}>Find</Command></Slot><Slot $l={14}><Chevron /></Slot></CommandRow>
        <CommandRow><Slot $l={11} $w={17}><ReplaceIcon /></Slot><Slot $l={2}><Command w={42}>Replace</Command></Slot></CommandRow>
        <CommandRow><Slot $l={15} $w={10}><PointerIcon /></Slot><Slot $l={5}><Command w={31}>Select</Command></Slot><Slot $l={3}><Chevron /></Slot></CommandRow>
      </CommandColumn>
    </CommandsBody>
  </Group>
);

const AddInsGroup = () => (
  <Group w={63} name="Add-ins" nameX={11} nameW={41}>
    <GroupBody><AddIns><Dot /><Command w={43}>Add-ins</Command></AddIns></GroupBody>
  </Group>
);

/* ---------- diagram ---------- */
type Entry = [string, number, boolean];
const INPUT: Entry[] = [
  ["User registration and", 125, true], ["profiles", 45, false],
  ["Business listing and", 116, true], ["details", 39, false],
  ["Job posting and", 93, true], ["applications", 72, false],
  ["Map/location data", 111, true],
  ["User queries (AI", 95, true], ["chatbot)", 50, false],
  ["External API data", 102, true], ["(Google Maps,", 87, false], ["payments)", 63, false],
];
const PROCESS: Entry[] = [
  ["User authentication &", 131, true], ["management", 79, false],
  ["Business directory", 109, true],
  ["Job portal operations", 127, true],
  ["Interactive map", 93, true], ["rendering", 58, false],
  ["AI chatbot processing", 129, true],
  ["Data storage &", 88, true], ["retrieval", 50, false],
  ["Security & validation", 123, true],
  ["Notification and", 96, true], ["feedback", 54, false],
];

const EntryList = ({ items, top }: { items: Entry[]; top: number }) => (
  <Lines $top={top}>
    {items.map(([text, w, first]) => (
      <Line key={text}><Bullet $on={first} /><Fit w={w}>{text}</Fit></Line>
    ))}
  </Lines>
);

const Diagram = () => (
  <Page>
    <Shapes width="814" height="496" viewBox="279 211 814 496">
      <g fill="#a5a5a5" stroke="#474747" strokeWidth="1.2">
        <path d="M563.5 417.5H594.5V404.5L620.5 430.5L594.5 456.5V443.5H563.5Z" />
        <path d="M819.5 417.5H850.5V404.5L876.5 430.5L850.5 456.5V443.5H819.5Z" />
      </g>
      <g fill="#afabab" stroke="#2c4067" strokeWidth="1.1">
        <path d="M471.3 623.7L490 642.5H480.5V679.7H597.5V698.3H461.8V642.5H452.5Z" />
        <path d="M961.8 623.5H982.5V695.2H861.3V705L840.5 684.8L861.3 664.7V674.7H961.8Z" />
      </g>
    </Shapes>
    <Node $x={95} $y={34} $h={369}>
      <NodeHead $divided><Fit w={39}>INPUT</Fit></NodeHead>
      <EntryList items={INPUT} top={41.7} />
    </Node>
    <Node $x={348} $y={34} $h={369}>
      <NodeHead $divided><Fit w={55}>PROCESS</Fit></NodeHead>
      <EntryList items={PROCESS} top={41.5} />
    </Node>
    <Node $x={602} $y={33} $h={370}>
      <NodeHead $divided $pad={6}><Fit w={52}>OUTPUT</Fit></NodeHead>
      <Result>
        <ResultLine w={83}>AI-Powered</ResultLine>
        <ResultLine w={90}>Catanduanes</ResultLine>
        <ResultLine w={57}>Connect</ResultLine>
      </Result>
    </Node>
    <Node $x={348} $y={460} $h={36}>
      <NodeHead><Fit w={64}>FEEDBACK</Fit></NodeHead>
    </Node>
    <PasteOptions>
      <PasteIcon s={15} />
      <PasteLabel w={27}>(Ctrl)</PasteLabel>
      <Drop />
    </PasteOptions>
  </Page>
);

/* ---------- taskbar icons ---------- */
const Explorer = () => (
  <svg width="22" height="18" viewBox="0 0 22 18">
    <path d="M0 0H9L10 1.5H22V17H0Z" fill="#ffd75e" />
    <path d="M0 0H9L10 2.5H0Z" fill="#e8a20c" />
    <path d="M4 17V10H18V17H14V13.5H8V17Z" fill="#3b94dc" />
  </svg>
);
const Media = () => (
  <svg width="24" height="24" viewBox="0 0 24 24">
    <defs><linearGradient id="media" x1="0" y1="0" x2="1" y2="1"><stop offset="0" stopColor="#ff9a3c" /><stop offset=".6" stopColor="#b98ad0" /><stop offset="1" stopColor="#9b7be0" /></linearGradient></defs>
    <circle cx="12" cy="12" r="11" fill="#2b2b2e" stroke="url(#media)" strokeWidth="2" />
    <path d="M9 6.5L17.5 12L9 17.5Z" fill="#fff" />
  </svg>
);
const Brave = () => (
  <svg width="20" height="24" viewBox="0 0 20 24">
    <path d="M5 0H15L17 2.3L19 2.5L20 5.5L19.3 8L17 17.5L10 24L3 17.5L.7 8L0 5.5L1 2.5L3 2.3Z" fill="#fb4b20" />
    <path d="M6 4.5L10 5.3L14 4.5L17.2 8.5L15.5 12.5L13 14.5L15 16L10 20L5 16L7 14.5L4.5 12.5L2.8 8.5Z" fill="#fff" />
    <path d="M5 9L8.5 10L8 12L6 11ZM15 9L11.5 10L12 12L14 11ZM8.3 13.5H11.7L10 15ZM8.5 16.8L10 16L11.5 16.8L10 17.8ZM9.3 6.5H10.7V12H9.3Z" fill="#fb4b20" />
  </svg>
);
const YouTube = () => (
  <svg width="24" height="17" viewBox="0 0 24 17">
    <rect width="24" height="17" rx="3" fill="#ff0033" />
    <path d="M9.8 5.3L15.5 8.5L9.8 11.7Z" fill="#fff" />
  </svg>
);
const Chrome = () => (
  <svg width="24" height="24" viewBox="0 0 24 24">
    <circle cx="12" cy="12" r="12" fill="#fbc116" />
    <path d="M12 12L1.6 6A12 12 0 0 1 22.4 6H12Z" fill="#e33b2e" />
    <path d="M1.6 6A12 12 0 0 0 12 24L17.2 15L12 12L6.8 15Z" fill="#2da94f" />
    <path d="M12 6H22.4A12 12 0 0 1 12 24L17.2 15Z" fill="#fbc116" />
    <circle cx="12" cy="12" r="6" fill="#fff" />
    <circle cx="12" cy="12" r="4.7" fill="#3b7ded" />
  </svg>
);
const Messenger = () => (
  <svg width="24" height="24" viewBox="0 0 24 24">
    <path d="M12 0C5 0 0 5 0 11.5C0 15.2 1.6 18.3 4.2 20.3V23.2C4.2 24 5 24.2 5.5 23.9L8 22.7C9.3 23.1 10.6 23.3 12 23.3C19 23.3 24 18.2 24 11.6C24 5 19 0 12 0Z" fill="#0a6cff" />
    <path d="M5 14.8L9.2 9L13.2 12L19 8.2L14.8 14.2L10.8 11.3Z" fill="#fff" stroke="#fff" strokeWidth="1" strokeLinejoin="round" />
  </svg>
);
const Gamepad = () => (
  <svg width="24" height="19" viewBox="0 0 24 19">
    <defs><linearGradient id="pad"><stop offset="0" stopColor="#6fc9ff" /><stop offset=".5" stopColor="#9a86f5" /><stop offset="1" stopColor="#f21bf2" /></linearGradient></defs>
    <path d="M4 5.5H20L22 8L24 16.5C23.8 19 21 19.5 20 17.5L17.5 14H6.5L4 17.5C3 19.5 .2 19 0 16.5L2 8Z" fill="url(#pad)" />
    <path d="M8.5 1H11.5V4H8.5ZM12.5 0H16V4H12.5Z" fill="#657ecb" />
    <path d="M6 8.5V12M4.2 10.2H7.8M8 6.5V9M11.8 6V9M15 6V9" stroke="#1d5070" />
    <circle cx="18" cy="10.2" r="1.3" fill="#1d5070" />
  </svg>
);
const FastStone = () => (
  <svg width="22" height="23" viewBox="0 0 22 23">
    <rect width="22" height="23" rx="2" fill="#073650" />
    <path d="M4 4H21.5V22H4Z" fill="#14a6d8" />
    <path d="M2.5 3.5H21.5V8H8V22H2.5Z" fill="#fff" />
    <path d="M6 11.5H13.5V7.5L20.5 14.2L13.5 20.5V16.5H6Z" fill="#fff" />
    <path d="M8 12.8H14.5V9.8L19 14.2L14.5 18.3V15.5H8Z" fill="#1390bf" />
  </svg>
);
const Facebook = () => (
  <svg width="24" height="24" viewBox="0 0 24 24">
    <circle cx="12" cy="12" r="12" fill="#0a8dff" />
    <path d="M10.2 23.8V15.5H7.3V12H10.2V9.4C10.2 6.3 12 4.7 14.7 4.7L17 4.9V7.9H15.4C13.9 7.9 13.6 8.8 13.6 9.8V12H16.8L16.2 15.5H13.6V23.8Z" fill="#fff" />
  </svg>
);
const WordIcon = () => (
  <svg width="24" height="22" viewBox="0 0 24 22">
    <path d="M6 0H24V5.5H6Z" fill="#41a5ee" />
    <path d="M6 5.5H24V11H6Z" fill="#2b7cd3" />
    <path d="M6 11H24V16.5H6Z" fill="#185abd" />
    <path d="M6 16.5H24V22H6Z" fill="#103f91" />
    <path d="M0 5H12.5V17.5H0Z" fill="#1c4f9f" />
    <text x="6.2" y="14.8" textAnchor="middle" fontFamily={UI} fontSize="9.5" fontWeight="700" fill="#fff">W</text>
  </svg>
);

const StatusStrip = () => (
  <Status>
    <StatusText w={57} $l={12}>Page 1 of 1</StatusText>
    <StatusText w={47} $l={31}>56 words</StatusText>
    <Slot $l={19}>
      <svg width="14" height="13" viewBox="0 0 14 13" fill="none" stroke="#fff">
        <path d="M6.5 2.5C5 1 3 .7 .5 .7V10.5H4.5L6.5 12V2.5C7.5 1 9.5 .7 13 .7V2.5M13 7V10.5H8.5L6.5 12M8 5.5L9.8 7.5L13.5 3" />
      </svg>
    </Slot>
    <StatusText w={104} $l={18}>English (Philippines)</StatusText>
    <Slot $l={29}>
      <svg width="16" height="15" viewBox="0 0 16 15" fill="none" stroke="#fff" strokeWidth="1.2">
        <path d="M4.5 1.5A5.8 5.8 0 0 0 5 12" strokeDasharray="3 1.4" />
        <path d="M6.5 0V4M5 2.8L6.5 4.3L8 2.8M12 3V6M10.5 4.5H13.5" />
        <path d="M7.5 6.5L15.5 14.5M15 7.5L8 14.5M4.5 6L8.5 8.8" strokeWidth="1.7" />
      </svg>
    </Slot>
    <StatusText w={126} $l={4} $b>Accessibility: Investigate</StatusText>
    <Slot $l={602}>
      <svg width="13" height="12" viewBox="0 0 13 12" fill="none" stroke="#fff">
        <path d="M.5 .5H5L6.5 1.5L8 .5H12.5V10H8L6.5 11.5L5 10H.5ZM6.5 1.5V11M2 3.5H5M2 5.5H5M2 7.5H5M8 3.5H11M8 5.5H11M8 7.5H11" />
      </svg>
    </Slot>
    <ViewOn>
      <svg width="14" height="13" viewBox="0 0 14 13" fill="none" stroke="#fff"><path d="M.5 .5H13.5V12.5H.5ZM2 3.5H12M2 5.5H12M2 7.5H12M2 9.5H12" /></svg>
    </ViewOn>
    <Slot $l={13}>
      <svg width="15" height="13" viewBox="0 0 15 13" fill="none" stroke="#fff">
        <path d="M6 10.5H.5V.5H11.5V4M2 3.5H10M2 5.5H7M2 7.5H6" />
        <circle cx="10.7" cy="8.7" r="3.5" fill="#fff" />
        <path d="M8 7.5H10V9.5H12M11 6V7.5H13" stroke={BLUE} />
      </svg>
    </Slot>
    <Slot $l={17}>
      <svg width="127" height="13" viewBox="1191 711 127 13" stroke="#fff">
        <path d="M1192 717.5H1200M1205 717.5H1305M1309.5 717.5H1317.5M1313.5 713.5V721.5" />
        <path d="M1253 712H1258V723H1253Z" fill="#fff" stroke="none" />
      </svg>
    </Slot>
    <StatusText w={27} $l={13}>100%</StatusText>
  </Status>
);

const TaskbarStrip = () => (
  <Taskbar>
    <StartCell>
      <svg width="16" height="16" viewBox="0 0 16 16" fill="#fff"><path d="M0 2.2L6.6 1.3V7.6H0ZM7.4 1.2L16 0V7.6H7.4ZM0 8.4H6.6V14.7L0 13.8ZM7.4 8.4H16V16L7.4 14.8Z" /></svg>
    </StartCell>
    <SearchBox>
      <svg width="17" height="17" viewBox="0 0 17 17" fill="none" stroke="#fff" strokeWidth="1.2"><circle cx="10.7" cy="6" r="5.2" /><path d="M7 9.8L.8 16" /></svg>
      <SearchLabel w={129}>Type here to search</SearchLabel>
    </SearchBox>
    <Slot $w={50}>
      <svg width="19" height="16" viewBox="1 0 17 16" fill="none" stroke="#fff"><path d="M1 0V2.5H11V0M1 4.5H11V11.5H1ZM1 16V13.5H11V16M14.5 0V3M14.5 8V16" /><path d="M13 4.5H16V7H13Z" fill="#fff" stroke="none" /></svg>
    </Slot>
    <AppCell $run><Explorer /></AppCell>
    <AppCell><Media /></AppCell>
    <AppCell $run><Brave /></AppCell>
    <AppCell $run><YouTube /></AppCell>
    <AppCell><Chrome /></AppCell>
    <AppCell><Messenger /></AppCell>
    <AppCell><Gamepad /></AppCell>
    <AppCell><FastStone /></AppCell>
    <AppCell><Facebook /></AppCell>
    <AppCell $run $active><WordIcon /></AppCell>
    <Tray>
      <svg width="12" height="7" viewBox="0 0 12 7" fill="none" stroke="#fff" strokeWidth="1.2"><path d="M.7 6.3L6 1L11.3 6.3" /></svg>
      <Slot $l={10}>
        <svg width="16" height="16" viewBox="0 0 16 16"><path d="M0 0H16V16H0Z" fill="#3d4043" /><path d="M1.5 3L4 4L12.5 5M2 3V7M3 8.5L2.5 11L5.5 14.5H11.5M8 9.5H13V14" fill="none" stroke="#84d80c" strokeWidth="1.7" strokeDasharray="2.2 .5" /></svg>
      </Slot>
      <Slot $l={8}>
        <svg width="17" height="12" viewBox="0 0 17 12" fill="none" stroke="#fff"><path d="M5 3.5H14.5V10.5H4.5V8M14.5 5.5H16V8.5H14.5" /><path d="M6 5H13V9H6Z" fill="#fff" stroke="none" /><path d="M1.5 0V2M4.5 0V2M.5 2.5H5.5V4.5L3 6.3L.5 4.5ZM3 6V9.5H5" /></svg>
      </Slot>
      <Slot $l={6}>
        <svg width="17" height="14" viewBox="0 0 17 14" fill="none" stroke="#fff"><path d="M.5 4.5H3L7 1V13L3 9.5H.5ZM9 4.5C10.2 6 10.2 8 9 9.5" /><path d="M11.3 3C13.3 5.5 13.3 8.5 11.3 11M13.5 1.2C16.5 4.5 16.5 9.5 13.5 12.8" opacity=".6" /></svg>
      </Slot>
      <Slot $l={10}>
        <svg width="14" height="14" viewBox="0 0 14 14" fill="none" stroke="#fff"><path d="M1 12A11 11 0 0 1 12.5 2" opacity=".75" /><path d="M3.5 12.5A8.5 8.5 0 0 1 12.5 5M6.2 13A5.8 5.8 0 0 1 12.5 8" strokeWidth="1.1" /><circle cx="11.3" cy="12" r="1.5" fill="#fff" stroke="none" /></svg>
      </Slot>
      <Slot $l={10}><TrayText w={23}>ENG</TrayText></Slot>
      <Clock><TrayText w={44}>5:30 AM</TrayText><TrayText w={58}>18/08/2025</TrayText></Clock>
      <Slot $l={17}>
        <svg width="24" height="26" viewBox="0 -2 24 26">
          <path d="M0 1H16V14H6.5L3 17V14H0Z" fill="#fff" />
          <path d="M3 4.5H13M3 7.5H13M3 10.5H10" stroke="#1c4f70" />
          <circle cx="15.5" cy="15.5" r="7.8" fill="#0f6cad" stroke="#5fa6d4" strokeWidth=".8" />
          <text x="15.5" y="19.3" fontFamily={UI} fontSize="10.5" fontWeight="600" textAnchor="middle" fill="#fff">3</text>
        </svg>
      </Slot>
      <ShowDesktop />
    </Tray>
  </Taskbar>
);

const TABS: [string, number][] = [
  ["Insert", 30], ["Draw", 27], ["Design", 36], ["Layout", 36], ["References", 57],
  ["Mailings", 45], ["Review", 37], ["View", 25], ["Help", 25],
];

export default function App() {
  return (
    <Window>
      <GlobalStyle />
      <Header>
        <CircuitArt />
        <TitleBar>
          <Slot $l={21}><SaveIcon /></Slot>
          <Slot $l={15}><UndoIcon /></Slot>
          <Slot $l={5}><Chevron /></Slot>
          <Slot $l={11}><RedoIcon /></Slot>
          <Slot $l={20}>
            <svg width="5" height="6" viewBox="0 0 5 6" fill="#666"><path d="M0 0H5V1H0ZM0 3H5L2.5 5.5Z" /></svg>
          </Slot>
          <Slot $l={487}><TitleText w={135}>Canceptual.docx  -  Word</TitleText></Slot>
          <Slot $l={243}><TitleText w={143}>renzesixthynine@gmail.com</TitleText></Slot>
          <Avatar>R</Avatar>
          <Slot $l={28}>
            <svg width="13" height="11" viewBox="0 0 13 11" fill="none" stroke="#333"><path d="M.5 .5H12.5V10.5H.5ZM.5 2.5H12.5M6.5 9V4.5M4.3 6.5L6.5 4.3L8.7 6.5" /></svg>
          </Slot>
          <Slot $l={35}><svg width="10" height="7" viewBox="0 0 10 7"><path d="M0 .5H10" stroke="#333" /></svg></Slot>
          <Slot $l={36}>
            <svg width="10" height="13" viewBox="0 0 10 13" fill="none" stroke="#333"><rect x=".5" y="2.5" width="7" height="7" rx="1" /><path d="M2.5 .5H7.5Q9.5 .5 9.5 2.5V7.5" /></svg>
          </Slot>
          <Slot $l={36}><svg width="11" height="14" viewBox="0 0 11 14"><path d="M.5 .5L10.5 10.5M10.5 .5L.5 10.5" stroke="#333" /></svg></Slot>
        </TitleBar>
        <TabBar>
          <FileTab><TabLabel w={18}>File</TabLabel></FileTab>
          <HomeTab><TabLabel w={33}>Home</TabLabel></HomeTab>
          <TabList>
            {TABS.map(([t, w]) => <TabLabel key={t} w={w}>{t}</TabLabel>)}
          </TabList>
          <Slot $l={30}><BulbIcon /></Slot>
          <TellMe w={150}>Tell me what you want to do</TellMe>
          <ShareButton><ShareIcon /><ShareLabel w={34}>Share</ShareLabel><Chevron /></ShareButton>
        </TabBar>
      </Header>

      <Ribbon>
        <ClipboardGroup />
        <FontGroup />
        <ParagraphGroup />
        <StylesGroup />
        <EditingGroup />
        <AddInsGroup />
        <Collapse>
          <svg width="9" height="6" viewBox="0 0 9 6" fill="none" stroke="#444"><path d="M.5 5L4.5 1L8.5 5" /></svg>
        </Collapse>
      </Ribbon>

      <Notice>
        <InfoIcon />
        <Slot $l={9}><NoticeText w={115}>GET GENUINE OFFICE</NoticeText></Slot>
        <Slot $l={10}>
          <NoticeText w={782}>Your license isn't genuine, and you may be a victim of software counterfeiting. Avoid interruption and keep your files safe with genuine Office today.</NoticeText>
        </Slot>
        <NoticeButton $w={133} $l={10}><NoticeText w={99}>Get genuine Office</NoticeText></NoticeButton>
        <NoticeButton $w={94} $l={9}><NoticeText w={60}>Learn more</NoticeText></NoticeButton>
        <Slot $l={152}><Cross s={9} /></Slot>
      </Notice>

      <RulerRow>
        <TabStop><TabStopBox><svg width="6" height="6" viewBox="0 0 6 6"><path d="M1 0V5H6" fill="none" stroke="#666" strokeWidth="2" /></svg></TabStopBox></TabStop>
        <HorizontalRuler />
      </RulerRow>
      <Desk>
        <VerticalRuler />
        <Diagram />
        <TextCursor width="7" height="14" viewBox="0 0 7 14"><path d="M0 .5H2.5L3.5 1.5L4.5 .5H7M3.5 1V13M0 13.5H2.5L3.5 12.5L4.5 13.5H7" fill="none" stroke="#e2e2e2" /></TextCursor>
      </Desk>

      <StatusStrip />
      <TaskbarStrip />
    </Window>
  );
}
